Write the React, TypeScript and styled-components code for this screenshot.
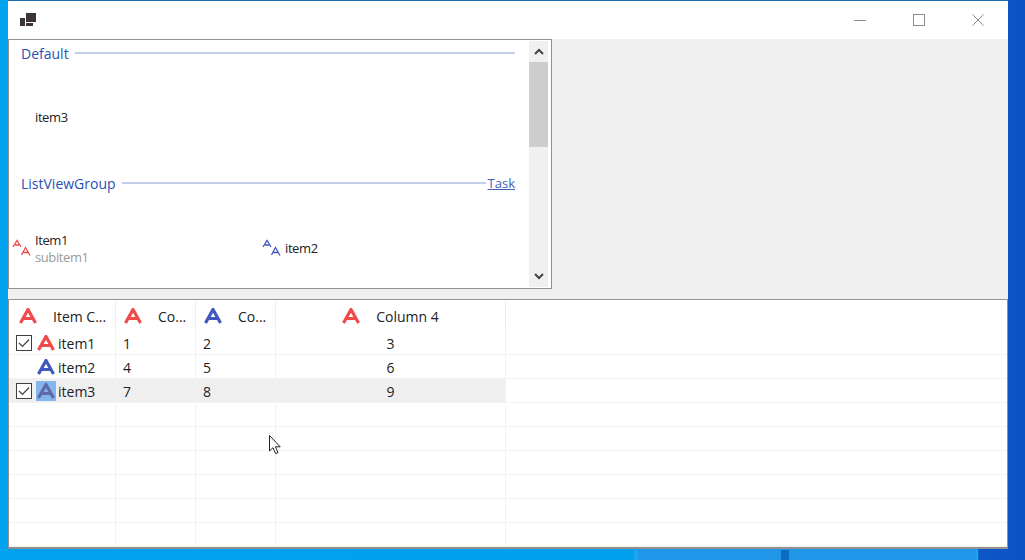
import styled, { createGlobalStyle } from 'styled-components';

const GlobalStyle = createGlobalStyle`
    html, body {
        margin: 0;
        padding: 0;
        width: 1025px;
        height: 560px;
        overflow: hidden;
        font-family: "Open Sans", "Noto Sans", "Liberation Sans", sans-serif;
    }
`;

const Desktop = styled.div`
    position: relative;
    width: 1025px;
    height: 560px;
    box-sizing: border-box;
    padding: 1px 17px 11px 8px;
    background:
        linear-gradient(#0a6cc0, #0a6cc0) 781px 550px / 8px 10px no-repeat,
        linear-gradient(#1aa6ee, #1aa6ee) 634px 550px / 4px 10px no-repeat,
        linear-gradient(#1aa6ee, #1aa6ee) 976px 550px / 2px 10px no-repeat,
        linear-gradient(90deg, #00a2ed 0, #00a0ee 630px, #2196e8 640px, #2196e8 977px, #0d57c9 979px, #0b52c6 100%);
`;

const Win = styled.div`
    width: 1000px;
    height: 548px;
    display: flex;
    flex-direction: column;
    background: #f0f0f0;
    box-shadow: 0 -1px 0 #1d6aa8;
`;

const TitleBar = styled.div`
    height: 38px;
    flex: none;
    display: flex;
    align-items: center;
    justify-content: space-between;
    background: #fff;
    padding: 0 1px 0 12px;
`;

const WinButtons = styled.div`
    display: flex;
    align-items: center;
`;

const WinButton = styled.div`
    width: 59px;
    height: 38px;
    display: flex;
    align-items: center;
    justify-content: center;
`;

const TopPane = styled.div`
    width: 544px;
    height: 250px;
    flex: none;
    box-sizing: border-box;
    display: flex;
    border: 1px solid #8f8f94;
    background: #fff;
    padding-right: 3px;
`;

const GroupList = styled.div`
    flex: 1;
    min-width: 0;
    padding: 3px 14px 0 3px;
`;

const GroupHeader = styled.div<{ $gap: number }>`
    display: flex;
    align-items: center;
    height: 20px;
    margin-top: ${props => props.$gap}px;
    padding-left: 9px;
    color: #2a4fb4;
    font-size: 14px;
`;

const GroupRule = styled.div`
    flex: 1;
    height: 2px;
    margin: 0 0 0 6px;
    background: #c3cdec;
`;

const TaskLink = styled.span`
    color: #3f62b8;
    font-size: 13px;
    text-decoration: underline;
    margin-left: 2px;
`;

const PlainItem = styled.div`
    margin-top: 44px;
    padding-left: 23px;
    height: 20px;
    line-height: 20px;
    font-size: 13px;
    letter-spacing: -0.4px;
    color: #222;
`;

const ItemRow = styled.div`
    display: flex;
    margin-top: 37px;
`;

const TileItem = styled.div<{ $width: number }>`
    width: ${props => props.$width}px;
    display: flex;
    align-items: center;
    gap: 3px;
    height: 36px;
`;

const TileText = styled.div<{ $drop?: number }>`
    font-size: 13px;
    line-height: 17px;
    letter-spacing: -0.4px;
    color: #222;
    margin-top: ${props => props.$drop ?? 0}px;
`;

const SubText = styled.div`
    color: #9a9a9a;
`;

const ScrollBar = styled.div`
    width: 19px;
    flex: none;
    margin: 1px 0;
    display: flex;
    flex-direction: column;
    align-items: center;
    background: #f0f0f0;
`;

const ScrollArrow = styled.div`
    height: 21px;
    width: 100%;
    flex: none;
    display: flex;
    align-items: center;
    justify-content: center;
`;

const ScrollThumb = styled.div`
    width: 100%;
    height: 85px;
    flex: none;
    background: #cdcdcd;
`;

const ScrollSpace = styled.div`
    flex: 1;
`;

const BottomPane = styled.div`
    margin-top: 10px;
    flex: 1;
    min-height: 0;
    box-sizing: border-box;
    border: 1px solid #8f8f94;
    border-bottom-width: 2px;
    background: #fff;
    padding: 1px 0 0 0;
    overflow: hidden;
`;

const Row = styled.div<{ $header?: boolean }>`
    display: flex;
    height: ${props => props.$header ? 30 : 23}px;
    border-bottom: ${props => props.$header ? "none" : "1px solid #f2f2f2"};
    color: #222;
    font-size: 14px;
`;

const Cell = styled.div<{ $width: number; $lined?: boolean; $center?: boolean; $shaded?: boolean }>`
    width: ${props => props.$width}px;
    flex: none;
    box-sizing: border-box;
    display: flex;
    align-items: center;
    justify-content: ${props => props.$center ? "center" : "flex-start"};
    padding-top: 2px;
    padding-left: ${props => props.$center ? 0 : 7}px;
    border-right: ${props => props.$lined ? "1px solid #f2f2f2" : "none"};
    background: ${props => props.$shaded ? "#efefef" : "transparent"};
`;

const HeadCell = styled.div<{ $width: number; $pad: number; $center?: boolean }>`
    width: ${props => props.$width}px;
    flex: none;
    box-sizing: border-box;
    display: flex;
    align-items: center;
    justify-content: ${props => props.$center ? "center" : "flex-start"};
    gap: 16px;
    padding-top: 2px;
    padding-left: ${props => props.$pad}px;
    border-right: 1px solid #eeeeee;
    margin-bottom: 1px;
    white-space: nowrap;

    svg {
        margin-top: -2px;
    }
`;

const FirstCell = styled(Cell)`
    padding-left: 7px;
`;

const CheckBox = styled.div<{ $hidden?: boolean }>`
    width: 16px;
    height: 16px;
    flex: none;
    box-sizing: border-box;
    margin-top: -2px;
    display: flex;
    align-items: center;
    justify-content: center;
    border: ${props => props.$hidden ? "none" : "1px solid #3f3f46"};
    background: ${props => props.$hidden ? "transparent" : "#fff"};
`;

const IconSlot = styled.div<{ $selected?: boolean }>`
    width: 20px;
    height: 20px;
    flex: none;
    margin: -2px 2px 0 4px;
    display: flex;
    align-items: center;
    justify-content: center;
    background: ${props => props.$selected ? "#82b6ec" : "transparent"};
`;

const Pointer = styled.svg`
    position: absolute;
    left: 269px;
    top: 435px;
`;

const RED = "#f04a4a";
const BLUE = "#4057bd";

const LetterIcon = ({ color }: { color: string }) => (
    <svg width="18" height="16" viewBox="0 0 18 16" fill="none">
        <path d="M1.5 15 L9 1.5 L16.5 15 M5 10.5 H13" stroke={color} strokeWidth="3.2" strokeLinejoin="round" />
    </svg>
);

const SmallLetters = ({ color }: { color: string }) => (
    <svg width="20" height="18" viewBox="0 0 20 18" fill="none">
        <path d="M1 8 L5 1.5 L9 8 M3 6 H7" stroke={color} strokeWidth="1.3" />
        <path d="M9.5 16 L13.5 8.5 L18 16.5 M11.5 13.5 H16" stroke={color} strokeWidth="1.3" />
    </svg>
);

const Check = () => (
    <svg width="12" height="10" viewBox="0 0 12 10" fill="none">
        <path d="M1 5 L4.5 8.5 L11 1.5" stroke="#3f3f46" strokeWidth="1.2" />
    </svg>
);

type ItemRowData = {
    name: string;
    color: string;
    checked: boolean;
    selected?: boolean;
    values: string[];
};

const items: ItemRowData[] = [
    { name: "item1", color: RED, checked: true, values: ["1", "2", "3"] },
    { name: "item2", color: BLUE, checked: false, values: ["4", "5", "6"] },
    { name: "item3", color: BLUE, checked: true, selected: true, values: ["7", "8", "9"] },
];

const App = () => {
    return (
        <Desktop>
            <GlobalStyle />
            <Win>
                <TitleBar>
                    <svg width="16" height="14" viewBox="0 0 16 14">
                        <rect x="0" y="5" width="5" height="8" fill="#3c3438" />
                        <rect x="6" y="0" width="10" height="9" fill="#3c3438" />
                        <rect x="6" y="10" width="7" height="3" fill="#3c3438" />
                    </svg>
                    <WinButtons>
                        <WinButton>
                            <svg width="12" height="12" viewBox="0 0 12 12">
                                <path d="M0 6.5 H12" stroke="#8c8c8c" />
                            </svg>
                        </WinButton>
                        <WinButton>
                            <svg width="12" height="12" viewBox="0 0 12 12">
                                <rect x="0.5" y="0.5" width="11" height="11" fill="none" stroke="#8c8c8c" />
                            </svg>
                        </WinButton>
                        <WinButton>
                            <svg width="12" height="12" viewBox="0 0 12 12">
                                <path d="M0.5 0.5 L11.5 11.5 M11.5 0.5 L0.5 11.5" stroke="#8c8c8c" />
                            </svg>
                        </WinButton>
                    </WinButtons>
                </TitleBar>
                <TopPane>
                    <GroupList>
                        <GroupHeader $gap={0}>
                            Default
                            <GroupRule />
                        </GroupHeader>
                        <PlainItem>item3</PlainItem>
                        <GroupHeader $gap={46}>
                            ListViewGroup
                            <GroupRule />
                            <TaskLink>Task</TaskLink>
                        </GroupHeader>
                        <ItemRow>
                            <TileItem $width={250}>
                                <SmallLetters color={RED} />
                                <TileText $drop={2}>
                                    Item1
                                    <SubText>subitem1</SubText>
                                </TileText>
                            </TileItem>
                            <TileItem $width={200}>
                                <SmallLetters color={BLUE} />
                                <TileText>item2</TileText>
                            </TileItem>
                        </ItemRow>
                    </GroupList>
                    <ScrollBar>
                        <ScrollArrow>
                            <svg width="10" height="7" viewBox="0 0 10 7" fill="none">
                                <path d="M1 6 L5 2 L9 6" stroke="#4a3f4c" strokeWidth="2" />
                            </svg>
                        </ScrollArrow>
                        <ScrollThumb />
                        <ScrollSpace />
                        <ScrollArrow>
                            <svg width="10" height="7" viewBox="0 0 10 7" fill="none">
                                <path d="M1 1 L5 5 L9 1" stroke="#4a3f4c" strokeWidth="2" />
                            </svg>
                        </ScrollArrow>
                    </ScrollBar>
                </TopPane>
                <BottomPane>
                    <Row $header>
                        <HeadCell $width={107} $pad={10}>
                            <LetterIcon color={RED} />
                            Item C...
                        </HeadCell>
                        <HeadCell $width={80} $pad={8}>
                            <LetterIcon color={RED} />
                            Co...
                        </HeadCell>
                        <HeadCell $width={80} $pad={8}>
                            <LetterIcon color={BLUE} />
                            Co...
                        </HeadCell>
                        <HeadCell $width={230} $pad={0} $center>
                            <LetterIcon color={RED} />
                            Column 4
                        </HeadCell>
                    </Row>
                    {items.map(item => (
                        <Row key={item.name}>
                            <FirstCell $width={107} $lined $shaded={item.selected}>
                                <CheckBox $hidden={!item.checked}>{item.checked && <Check />}</CheckBox>
                                <IconSlot $selected={item.selected}>
                                    <LetterIcon color={item.selected ? "#5f6aa8" : item.color} />
                                </IconSlot>
                                {item.name}
                            </FirstCell>
                            <Cell $width={80} $lined $shaded={item.selected}>{item.values[0]}</Cell>
                            <Cell $width={80} $lined $shaded={item.selected}>{item.values[1]}</Cell>
                            <Cell $width={230} $lined $center $shaded={item.selected}>{item.values[2]}</Cell>
                        </Row>
                    ))}
                    {[0, 1, 2, 3, 4, 5].map(i => (
                        <Row key={i}>
                            <Cell $width={107} $lined />
                            <Cell $width={80} $lined />
                            <Cell $width={80} $lined />
                            <Cell $width={230} $lined />
                        </Row>
                    ))}
                </BottomPane>
            </Win>
            <Pointer width="13" height="20" viewBox="0 0 13 20">
                <path d="M0.5 0.5 V16 L4 12.7 L6.6 18.6 L9 17.6 L6.4 11.8 H11.2 Z" fill="#fff" stroke="#222" strokeWidth="1" />
            </Pointer>
        </Desktop>
    );
};

export default App;
